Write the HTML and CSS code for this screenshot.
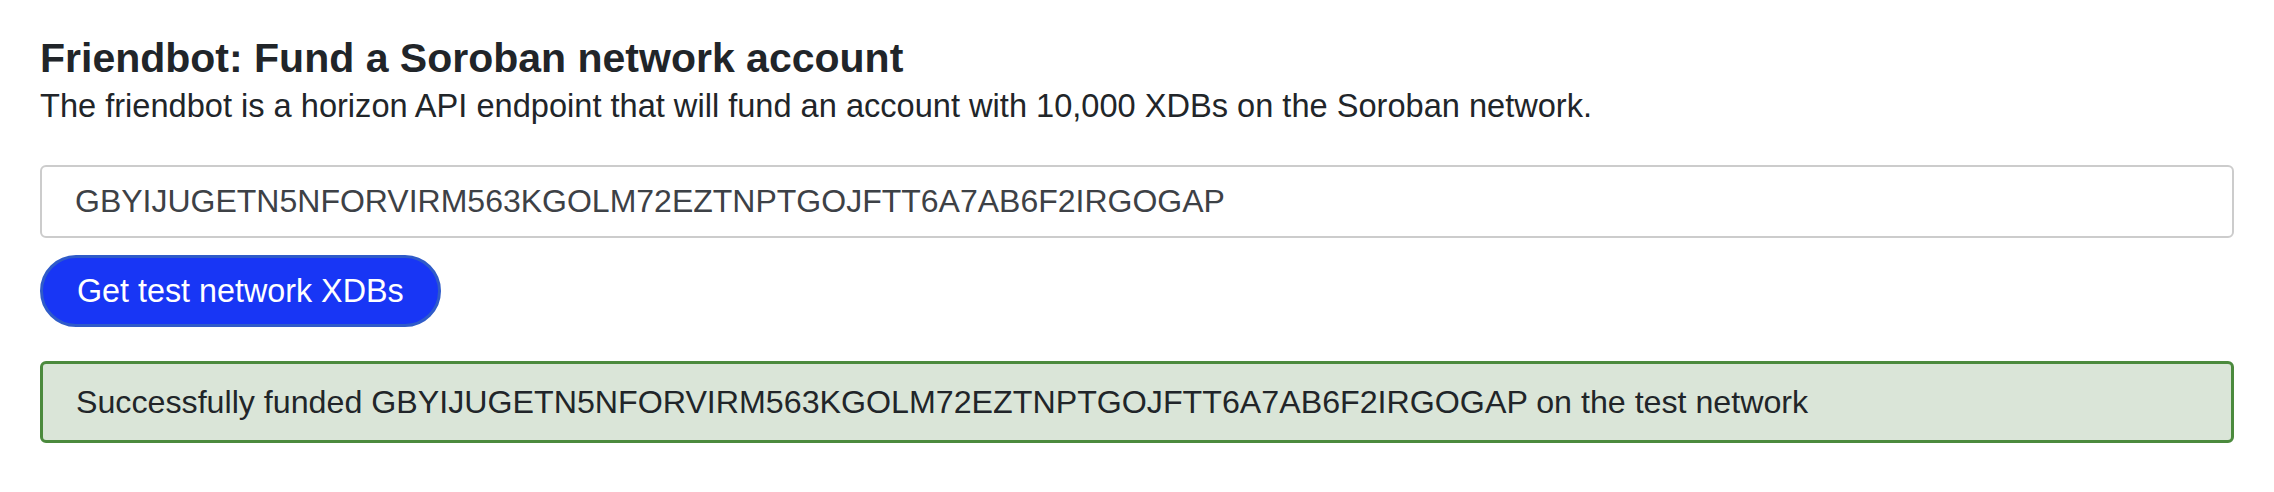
FILE: index.html
```html
<!DOCTYPE html>
<html lang="en">
<head>
<meta charset="utf-8">
<title>Friendbot</title>
<link rel="stylesheet" href="styles.css">
</head>
<body>
<main class="page">
  <h1 class="title">Friendbot: Fund a Soroban network account</h1>
  <p class="lead">The friendbot is a horizon API endpoint that will fund an account with 10,000 XDBs on the Soroban network.</p>
  <form class="fund-form">
    <input class="address-input" type="text" value="GBYIJUGETN5NFORVIRM563KGOLM72EZTNPTGOJFTT6A7AB6F2IRGOGAP">
    <div class="actions">
      <button class="btn-primary" type="button">Get test network XDBs</button>
    </div>
  </form>
  <div class="alert-success">Successfully funded GBYIJUGETN5NFORVIRM563KGOLM72EZTNPTGOJFTT6A7AB6F2IRGOGAP on the test network</div>
</main>
</body>
</html>
```

FILE: styles.css
```css
* { box-sizing: border-box; }
html, body { margin: 0; padding: 0; background: #ffffff; }
body {
  font-family: "Liberation Sans", Arial, Helvetica, sans-serif;
  color: #212529;
}
.page {
  padding: 34px 40px 40px;
  display: flex;
  flex-direction: column;
}
.title {
  margin: 0;
  font-size: 41px;
  line-height: 48px;
  font-weight: 700;
  color: #212529;
}
.lead {
  margin: 0 0 35px;
  font-size: 32.6px;
  line-height: 48px;
}
.fund-form {
  display: flex;
  flex-direction: column;
  gap: 17px;
}
.address-input {
  width: 100%;
  height: 73px;
  padding: 10px 24px 10px 33px;
  font-family: inherit;
  font-size: 32px;
  line-height: 48px;
  color: #3d4146;
  background: #fff;
  border: 2px solid #cccccc;
  border-radius: 6px;
  outline: none;
}
.actions { display: flex; }
.btn-primary {
  height: 72px;
  padding: 0 34px;
  font-family: inherit;
  font-size: 32.3px;
  line-height: 48px;
  color: #ffffff;
  background: #1836f5;
  border: 3px solid #2f5bc9;
  border-radius: 36px;
}
.alert-success {
  margin-top: 34px;
  height: 82px;
  display: flex;
  align-items: center;
  padding: 0 33px;
  font-size: 32.2px;
  line-height: 48px;
  color: #212529;
  background: #dae5d8;
  border: 3px solid #4b8a3d;
  border-radius: 6px;
}
```
